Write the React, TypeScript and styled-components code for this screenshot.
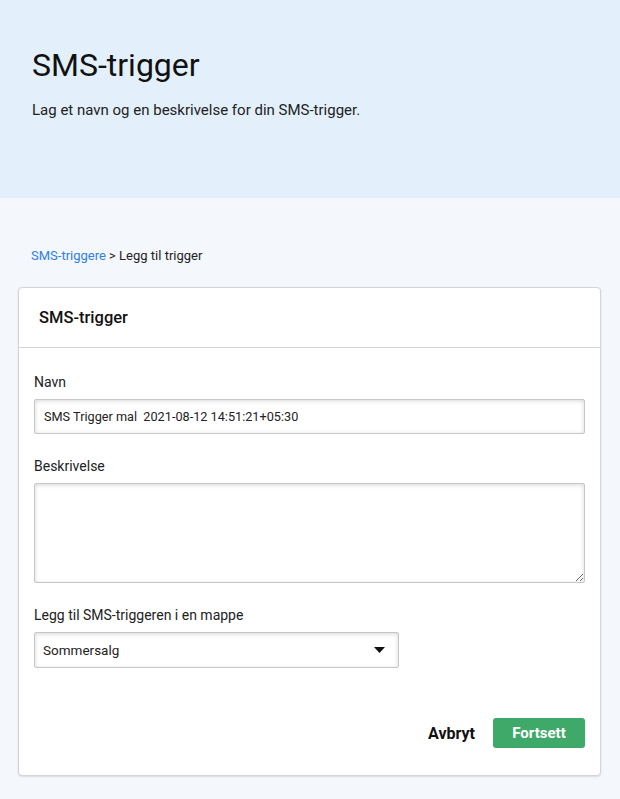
import React from 'react'
import styled, { createGlobalStyle } from 'styled-components'

const GlobalStyle = createGlobalStyle`
  html, body {
    margin: 0;
    padding: 0;
    background: #f4f7fb;
    font-family: Roboto, "Liberation Sans", Arial, sans-serif;
    color: #1a1a1a;
  }
  * {
    box-sizing: border-box;
  }
`

const Page = styled.div`
  min-height: 799px;
  background: #f4f7fb;
`

const Hero = styled.header`
  height: 198px;
  background: #e3f0fc;
  padding: 46px 32px 0;
`

const HeroTitle = styled.h1`
  margin: 0;
  font-size: 32px;
  line-height: 38px;
  font-weight: 400;
  color: #111;
`

const HeroText = styled.p`
  margin: 16px 0 0;
  font-size: 15px;
  line-height: 20px;
  color: #222;
`

const Content = styled.main`
  padding: 49px 19px 23px 18px;
`

const Breadcrumb = styled.nav`
  font-size: 13px;
  line-height: 17px;
  padding-left: 13px;
  color: #222;

  a {
    color: #2f7fe6;
    text-decoration: none;
  }
`

const Card = styled.section`
  margin-top: 23px;
  background: white;
  border: 1px solid #d2d4d8;
  border-radius: 4px;
  box-shadow: 0 1px 2px rgba(0, 0, 0, 0.12);
`

const CardHeader = styled.div`
  height: 60px;
  padding: 0 20px;
  display: flex;
  align-items: center;
  border-bottom: 1px solid #d2d4d8;
`

const CardTitle = styled.h2`
  margin: 0;
  font-size: 16.5px;
  font-weight: 500;
  color: #111;
`

const CardBody = styled.div`
  padding: 25px 15px 27px;
  display: flex;
  flex-direction: column;
`

const Field = styled.div<{ $first?: boolean }>`
  display: flex;
  flex-direction: column;
  gap: 8px;
  margin-top: ${props => props.$first ? '0' : '23px'};
`

const Label = styled.label`
  font-size: 14px;
  line-height: 18px;
  color: #222;
`

const fieldBox = `
  width: 100%;
  border: 1px solid #c6c6c6;
  border-radius: 2px;
  background: white;
  box-shadow: inset 0 1px 4px rgba(0, 0, 0, 0.16);
  font-family: Roboto, "Liberation Sans", Arial, sans-serif;
  color: #222;
  outline: none;
`

const TextInput = styled.input`
  ${fieldBox}
  height: 35px;
  padding: 0 9px;
  font-size: 12.7px;
`

const TextArea = styled.textarea`
  ${fieldBox}
  height: 100px;
  padding: 8px 9px;
  font-size: 13px;
  resize: vertical;
  display: block;
`

const SelectWrap = styled.div`
  position: relative;
  width: 365px;
`

const Select = styled.select`
  ${fieldBox}
  height: 36px;
  padding: 0 32px 0 8px;
  font-size: 13.5px;
  appearance: none;
  -webkit-appearance: none;
`

const Caret = styled.svg`
  position: absolute;
  right: 14px;
  top: 15px;
  pointer-events: none;
`

const Footer = styled.div`
  margin-top: 50px;
  display: flex;
  justify-content: flex-end;
  align-items: center;
  gap: 17px;
`

const Button = styled.button<{ $primary?: boolean }>`
  height: 30px;
  border: none;
  border-radius: 3px;
  font-family: Roboto, "Liberation Sans", Arial, sans-serif;
  font-size: ${props => props.$primary ? '15px' : '16px'};
  font-weight: 700;
  cursor: pointer;
  background: ${props => props.$primary ? '#3fa96a' : 'transparent'};
  color: ${props => props.$primary ? 'white' : '#111'};
  width: ${props => props.$primary ? '92px' : 'auto'};
  padding: ${props => props.$primary ? '0' : '0 1px'};
`

const App: React.FC = () => {
  return (
    <Page>
      <GlobalStyle />
      <Hero>
        <HeroTitle>SMS-trigger</HeroTitle>
        <HeroText>Lag et navn og en beskrivelse for din SMS-trigger.</HeroText>
      </Hero>
      <Content>
        <Breadcrumb>
          <a href="#">SMS-triggere</a> &gt; Legg til trigger
        </Breadcrumb>
        <Card>
          <CardHeader>
            <CardTitle>SMS-trigger</CardTitle>
          </CardHeader>
          <CardBody>
            <Field $first>
              <Label htmlFor="navn">Navn</Label>
              <TextInput id="navn" defaultValue="SMS Trigger mal  2021-08-12 14:51:21+05:30" />
            </Field>
            <Field>
              <Label htmlFor="beskrivelse">Beskrivelse</Label>
              <TextArea id="beskrivelse" />
            </Field>
            <Field>
              <Label htmlFor="mappe">Legg til SMS-triggeren i en mappe</Label>
              <SelectWrap>
                <Select id="mappe" defaultValue="sommersalg">
                  <option value="sommersalg">Sommersalg</option>
                </Select>
                <Caret width="11" height="6" viewBox="0 0 11 6">
                  <path d="M0 0h11L5.5 6z" fill="#111" />
                </Caret>
              </SelectWrap>
            </Field>
            <Footer>
              <Button>Avbryt</Button>
              <Button $primary>Fortsett</Button>
            </Footer>
          </CardBody>
        </Card>
      </Content>
    </Page>
  )
}

export default App
